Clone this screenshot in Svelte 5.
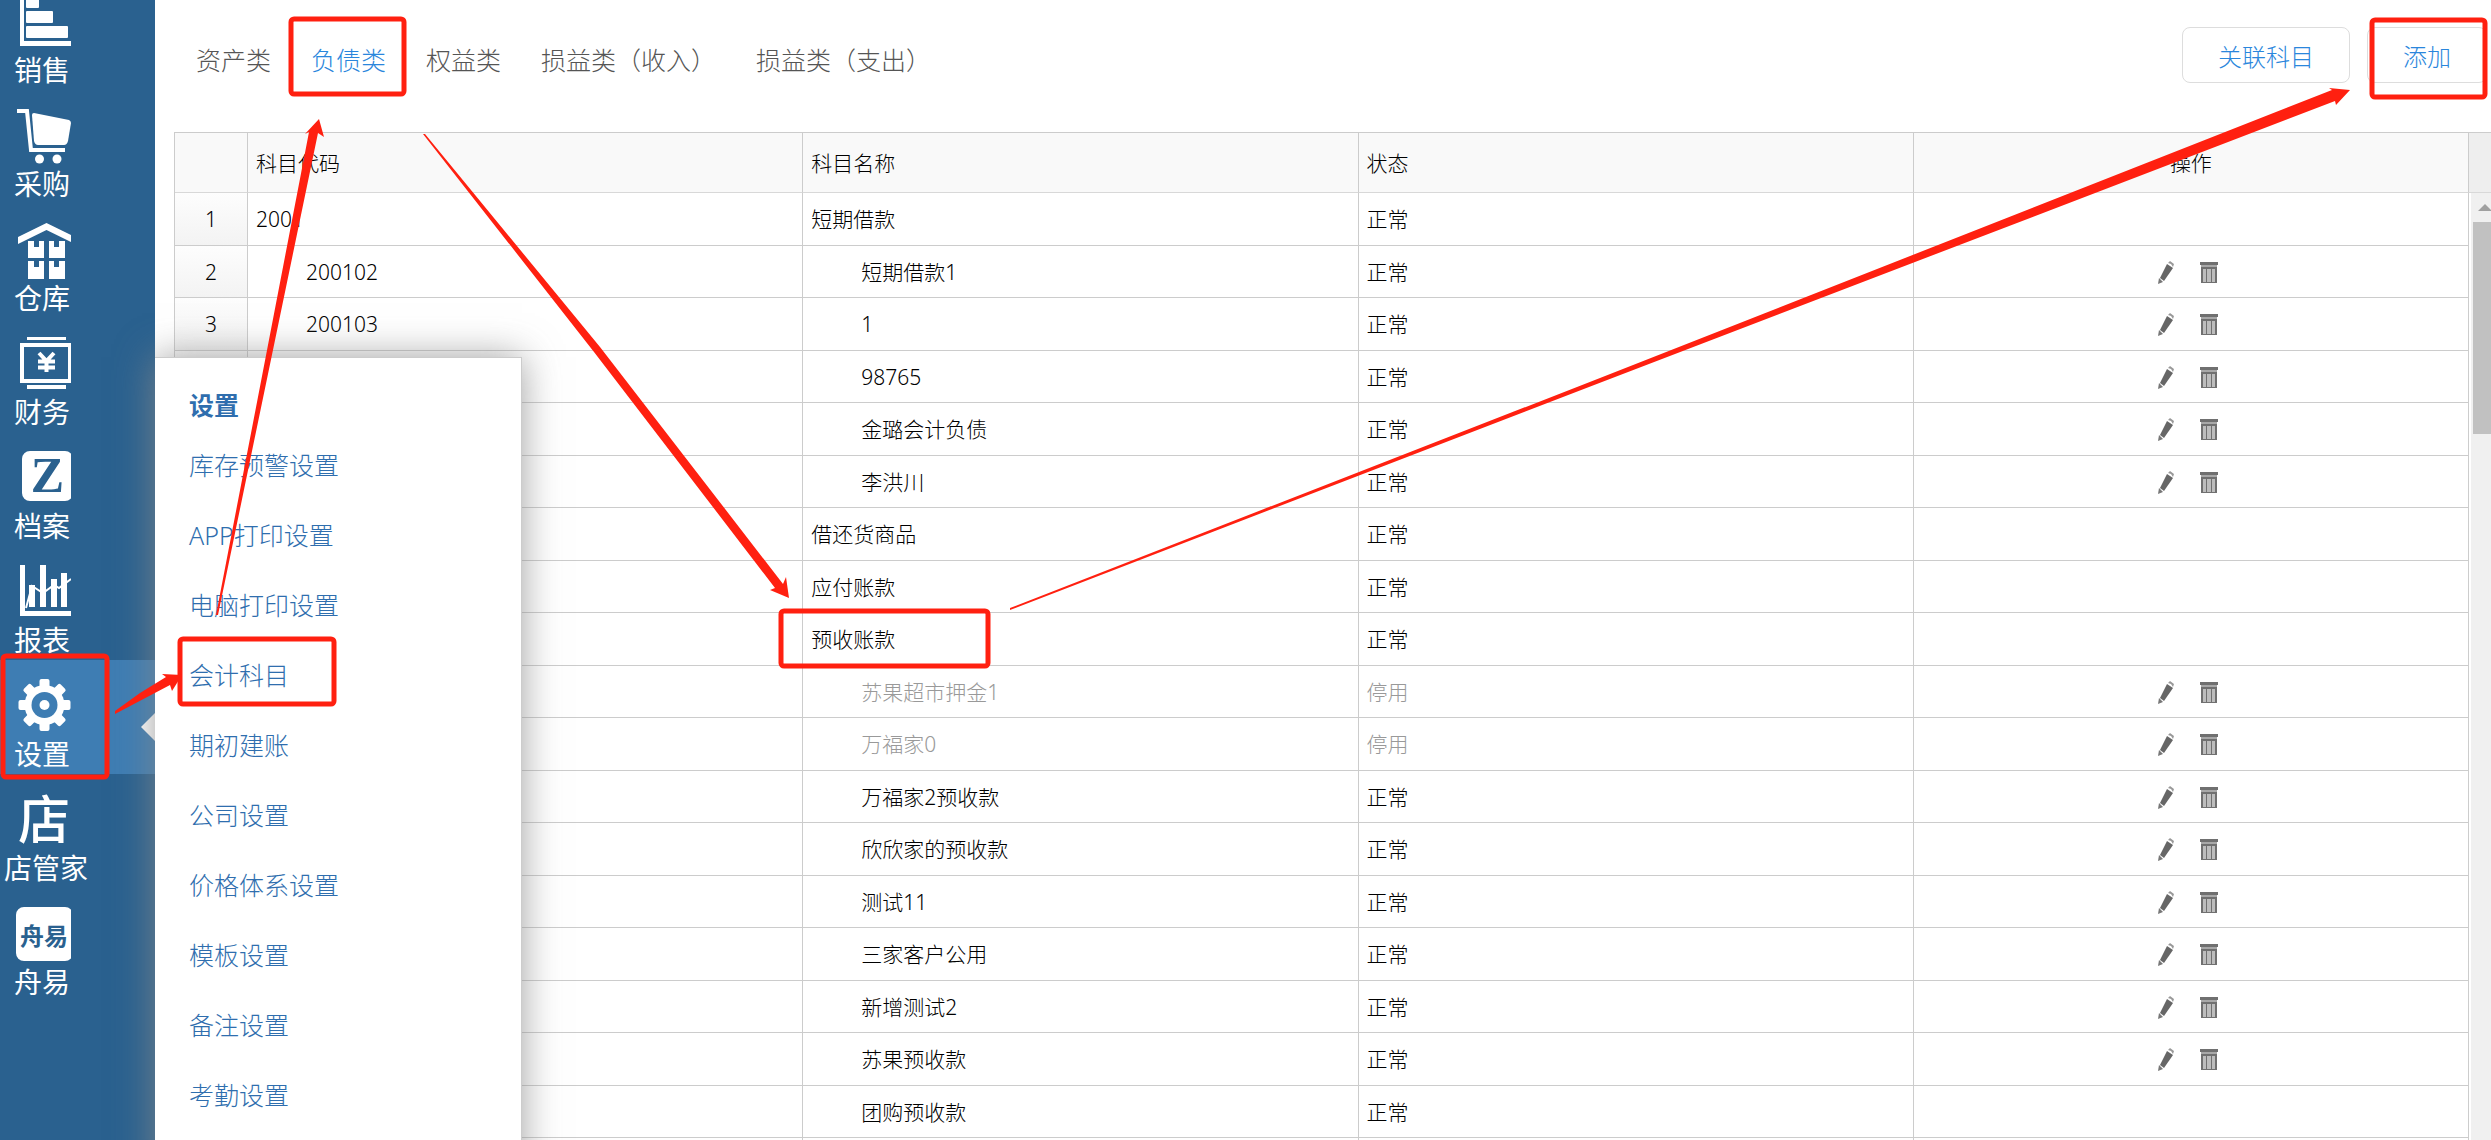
<script lang="ts">
	type Row = { num?: number; code?: string; name: string; child?: boolean; disabled?: boolean };

	const nav = [
		{ id: 'sales', label: '销售' },
		{ id: 'purchase', label: '采购' },
		{ id: 'stock', label: '仓库' },
		{ id: 'finance', label: '财务' },
		{ id: 'archive', label: '档案' },
		{ id: 'report', label: '报表' },
		{ id: 'settings', label: '设置' },
		{ id: 'shop', label: '店管家' },
		{ id: 'zhouyi', label: '舟易' }
	];

	const menu = [
		'库存预警设置',
		'APP打印设置',
		'电脑打印设置',
		'会计科目',
		'期初建账',
		'公司设置',
		'价格体系设置',
		'模板设置',
		'备注设置',
		'考勤设置'
	];

	const tabs = ['资产类', '负债类', '权益类', '损益类（收入）', '损益类（支出）'];

	const rows: Row[] = [
		{ num: 1, code: '2001', name: '短期借款' },
		{ num: 2, code: '200102', name: '短期借款1', child: true },
		{ num: 3, code: '200103', name: '1', child: true },
		{ name: '98765', child: true },
		{ name: '金璐会计负债', child: true },
		{ name: '李洪川', child: true },
		{ name: '借还货商品' },
		{ name: '应付账款' },
		{ name: '预收账款' },
		{ name: '苏果超市押金1', child: true, disabled: true },
		{ name: '万福家0', child: true, disabled: true },
		{ name: '万福家2预收款', child: true },
		{ name: '欣欣家的预收款', child: true },
		{ name: '测试11', child: true },
		{ name: '三家客户公用', child: true },
		{ name: '新增测试2', child: true },
		{ name: '苏果预收款', child: true },
		{ name: '团购预收款', child: true }
	];
	const locked = ['团购预收款'];

	const teeth = [0, 45, 90, 135, 180, 225, 270, 315];

	let activeNav = $state('settings');
	let activeTab = $state('负债类');
</script>

<div class="app">
	<nav class="sidebar">
		<ul>
			{#each nav as item}
				<li>
					<button
						class="nav-item"
						class:active={activeNav === item.id}
						class:wide={item.label.length > 2}
						onclick={() => (activeNav = item.id)}
					>
						<svg class="nav-icon" viewBox="-4 0 57 56" aria-hidden="true">
							{#if item.id === 'sales'}
								<path d="M2 0h4v46h47v5H2z" />
								<rect x="8" y="1" width="13" height="12" rx="1" />
								<rect x="8" y="16" width="27" height="12" rx="1" />
								<rect x="8" y="31" width="42" height="12" rx="1" />
							{:else if item.id === 'purchase'}
								<path class="line" d="M-1 2H9L13 41H47" />
								<path d="M16 4L51 11Q53 12 53 14L50 32Q49 36 46 36H20Q17 36 16 32L14 6Q14 4 16 4z" />
								<circle cx="21.5" cy="50" r="4.5" />
								<circle cx="39" cy="50" r="4.5" />
							{:else if item.id === 'stock'}
								<path d="M0 14L28.5 0L57 14V21L28.5 7L0 21z" />
								<path d="M10 18h6v6h5v-6h5v17H10zM31 18h5v6h5v-6h6v17H31zM10 38h6v6h5v-6h5v18H10zM31 38h5v6h5v-6h6v18H31z" />
							{:else if item.id === 'finance'}
								<rect x="9" y="-1" width="39" height="4" />
								<rect class="line" x="4" y="8" width="48" height="36" />
								<path class="line" d="M21 16L28.5 24L36 16M28.5 24V35M20 24.5H37M20 30.5H37" />
								<rect x="9" y="48" width="39" height="4" />
							{:else if item.id === 'archive'}
								<rect x="4" y="0" width="51" height="50" rx="8" />
								<text class="z" x="29.5" y="41">Z</text>
							{:else if item.id === 'report'}
								<path d="M2 0h5v46h46v5H2z" />
								<path d="M11 20h6v22h-6zM22 0h6v42h-6zM33 14h6v28h-6zM43 8h6v34h-6z" />
								<path class="thin" d="M8 43L14 21L25 28L36 20L41 23L53 14" />
							{:else if item.id === 'settings'}
								{#each teeth as angle}
									<rect x="21.5" y="0" width="10" height="14" rx="2" transform="rotate({angle} 26.5 26)" />
								{/each}
								<circle cx="26.5" cy="26" r="20" />
								<circle class="hole" cx="26.5" cy="26" r="13" />
								<circle cx="26.5" cy="26" r="5" />
							{:else if item.id === 'shop'}
								<text class="shop" x="26" y="46">店</text>
							{:else}
								<rect x="-2" y="0" width="57" height="54" rx="8" />
								<text class="zy" x="26" y="38">舟易</text>
							{/if}
						</svg>
						<span>{item.label}</span>
					</button>
				</li>
			{/each}
		</ul>
	</nav>

	<aside class="submenu">
		<h2>设置</h2>
		<ul>
			{#each menu as entry}
				<li><a href="#{entry}">{entry}</a></li>
			{/each}
		</ul>
	</aside>

	<main>
		<header>
			<div class="tabs" role="tablist">
				{#each tabs as tab}
					<button
						class="tab"
						class:active={activeTab === tab}
						role="tab"
						aria-selected={activeTab === tab}
						onclick={() => (activeTab = tab)}>{tab}</button>
				{/each}
			</div>
			<div class="actions">
				<button class="btn">关联科目</button>
				<button class="btn">添加</button>
			</div>
		</header>

		<div class="grid">
			<table>
				<colgroup>
					<col class="num-col" />
					<col /><col /><col /><col />
				</colgroup>
				<thead>
					<tr>
						<th class="num"></th>
						<th>科目代码</th>
						<th>科目名称</th>
						<th>状态</th>
						<th class="ops">操作</th>
					</tr>
				</thead>
				<tbody>
					{#each rows as row}
						<tr class:disabled={row.disabled}>
							<td class="num">{row.num ?? ''}</td>
							<td class:child={row.child}>{row.code ?? ''}</td>
							<td class:child={row.child}>{row.name}</td>
							<td>{row.disabled ? '停用' : '正常'}</td>
							<td class="ops">
								{#if row.child && !locked.includes(row.name)}
									<div class="row-actions">
										<button aria-label="编辑">
											<svg width="18" height="24" viewBox="0 0 18 24">
												<path d="M10 4L16 8L7 21L3 18z" fill="#666" />
												<path d="M2 18L6 22L1 24z" fill="#777" />
												<path d="M11 3L13 1L17 4L16 7L14 4z" fill="#999" />
											</svg>
										</button>
										<button aria-label="删除">
											<svg width="18" height="24" viewBox="0 0 18 24">
												<path d="M0 2h18v3H0z" fill="#707070" />
												<path d="M1 5h16v2H1z" fill="#a8a8a8" />
												<path d="M1 7h16v16H1z" fill="#bdbdbd" />
												<path d="M1 7h16v2H1zM1 7h2v16H1zM15 7h2v16h-2zM6 8h1v15H6zM11 8h1v15h-1zM1 22h16v1H1z" fill="#707070" />
											</svg>
										</button>
									</div>
								{/if}
							</td>
						</tr>
					{/each}
					<tr>
						<td class="num"></td><td></td><td></td><td></td><td></td>
					</tr>
				</tbody>
			</table>
			<div class="gutter">
				<div class="gutter-head"></div>
				<div class="scrollbar">
					<div class="scroll-up"></div>
					<div class="scroll-thumb"></div>
				</div>
			</div>
		</div>
	</main>

	<!-- walkthrough marks drawn over the page -->
	<svg class="guide" aria-hidden="true">
		<rect x="3" y="656" width="104" height="121" rx="3" />
		<rect x="180" y="639" width="154" height="65" rx="3" />
		<rect x="291" y="19" width="113" height="75" rx="3" />
		<rect x="781" y="611" width="207" height="55" rx="3" />
		<rect x="2372" y="20" width="113" height="77" rx="3" />
		<path d="M115 711L140 693L166 677L162 674L182 675L172 691L170 685L115 714z" />
		<path d="M216 615L309 132L305 134L319 119L324 137L318 133L218 615z" />
		<path d="M423 134L425 134L600 347L783 584L786 577L789 598L770 590L775 588L594 352z" />
		<path d="M1010 608L1600 378L2332 90L2329 88L2350 90L2336 105L2335 101L1602 382L1010 610z" />
	</svg>
</div>

<style>
	:global(body) {
		margin: 0;
		background: #fff;
		font-family: 'Noto Sans', 'Noto Sans CJK SC', sans-serif;
	}
	button {
		padding: 0;
		border: 0;
		background: none;
		font: inherit;
		color: inherit;
		cursor: pointer;
	}
	ul {
		list-style: none;
		margin: 0;
		padding: 0;
	}
	.app {
		position: relative;
		display: flex;
		height: 100vh;
		overflow: hidden;
	}

	.sidebar {
		flex: 0 0 155px;
		background: #2a618f;
		overflow: hidden;
	}
	/* list is scrolled a little, the first icon is cut off */
	.sidebar ul {
		margin-top: -24px;
	}
	.nav-item {
		position: relative;
		display: flex;
		flex-direction: column;
		align-items: flex-start;
		width: 100%;
		height: 114px;
		padding: 19px 0 0 14px;
		color: #fff;
		font-size: 28px;
		line-height: 38px;
		white-space: nowrap;
	}
	.nav-item.active {
		background: #3e7db3;
	}
	.nav-item.active::after {
		content: '';
		position: absolute;
		right: 0;
		top: 53px;
		border: 14px solid transparent;
		border-left: 0;
		border-right-color: #fff;
	}
	.nav-item.wide span {
		margin-left: -10px;
	}
	.nav-icon {
		flex: none;
		width: 57px;
		height: 56px;
		fill: #fff;
	}
	.nav-icon .line {
		fill: none;
		stroke: #fff;
		stroke-width: 4;
	}
	.nav-icon .thin {
		fill: none;
		stroke: #fff;
		stroke-width: 2;
	}
	.nav-icon .hole {
		fill: #3e7db3;
	}
	.nav-icon text {
		text-anchor: middle;
		font-weight: 700;
	}
	.nav-icon .z {
		fill: #2a618f;
		font-family: 'Liberation Serif', serif;
		font-size: 50px;
	}
	.nav-icon .shop {
		font-size: 52px;
		font-weight: 500;
	}
	.nav-icon .zy {
		fill: #2a618f;
		font-size: 24px;
	}

	.submenu {
		position: absolute;
		left: 155px;
		top: 357px;
		bottom: -40px;
		z-index: 2;
		box-sizing: border-box;
		width: 367px;
		padding: 22px 34px;
		border: 1px solid #ccc;
		border-left: 0;
		background: #fff;
		box-shadow: 0 0 36px rgba(136, 136, 136, 0.8);
		color: #2f6eae;
		font-size: 25px;
		font-weight: 300;
	}
	.submenu h2 {
		margin: 0;
		font-size: 25px;
		line-height: 50px;
	}
	.submenu a {
		display: block;
		color: inherit;
		line-height: 70px;
		text-decoration: none;
	}

	main {
		flex: 1;
		min-width: 0;
		display: flex;
		flex-direction: column;
	}
	header {
		display: flex;
		justify-content: space-between;
		align-items: flex-start;
		padding: 27px 4px 39px 41px;
		font-weight: 300;
	}
	.tabs {
		display: flex;
		gap: 40px;
	}
	.tab {
		color: #555;
		font-size: 25px;
		line-height: 66px;
	}
	.tab.active {
		color: #2a86dc;
	}
	.actions {
		display: flex;
		gap: 17px;
	}
	.btn {
		height: 56px;
		padding: 0 35px;
		border: 1px solid #ddd;
		border-radius: 8px;
		background: #fff;
		color: #2a86dc;
		font-size: 24px;
	}

	.grid {
		flex: 1;
		min-height: 0;
		display: flex;
		align-items: flex-start;
		margin-left: 19px;
		border-top: 1px solid #ccc;
		border-left: 1px solid #ccc;
		overflow: hidden;
	}
	table {
		flex: 1;
		width: 100%;
		table-layout: fixed;
		border-collapse: separate;
		border-spacing: 0;
		font-size: 21px;
		line-height: 30px;
	}
	.num-col {
		width: 73px;
	}
	th,
	td {
		box-sizing: border-box;
		height: 52px;
		padding: 0 8px;
		border-right: 1px solid #ccc;
		border-bottom: 1px solid #ccc;
		color: #000;
		text-align: left;
		font-weight: 300;
	}
	th {
		height: 60px;
		background: #f9f9f9;
		border-bottom-color: #d8d8d8;
	}
	tbody tr:nth-child(odd) td {
		height: 53px;
	}
	.num {
		text-align: center;
	}
	td.num {
		background: linear-gradient(#fdfdfd, #f3f3f3);
	}
	td.child {
		padding-left: 58px;
	}
	.disabled td {
		color: #999;
	}
	.ops {
		text-align: center;
	}
	.row-actions {
		display: flex;
		justify-content: center;
		gap: 25px;
		padding-right: 6px;
	}
	.row-actions button,
	.row-actions svg {
		display: block;
	}

	.gutter {
		flex: 0 0 22px;
		align-self: stretch;
		display: flex;
		flex-direction: column;
		overflow: hidden;
	}
	.gutter-head {
		box-sizing: border-box;
		flex: 0 0 60px;
		background: #eee;
		border-bottom: 1px solid #d8d8d8;
	}
	.scrollbar {
		flex: 1;
		width: 28px;
		margin-left: 2px;
		background: #f0f0f0;
	}
	.scroll-up {
		display: flex;
		align-items: center;
		justify-content: center;
		height: 29px;
	}
	.scroll-up::before {
		content: '';
		border: 7px solid transparent;
		border-top: 0;
		border-bottom-color: #a0a0a0;
	}
	.scroll-thumb {
		height: 212px;
		margin: 0 2px;
		background: #c1c1c1;
	}

	.guide {
		position: absolute;
		inset: 0;
		z-index: 3;
		width: 100%;
		height: 100%;
		pointer-events: none;
	}
	.guide rect {
		fill: none;
		stroke: #ff2010;
		stroke-width: 5;
	}
	.guide path {
		fill: #ff2010;
	}
</style>
